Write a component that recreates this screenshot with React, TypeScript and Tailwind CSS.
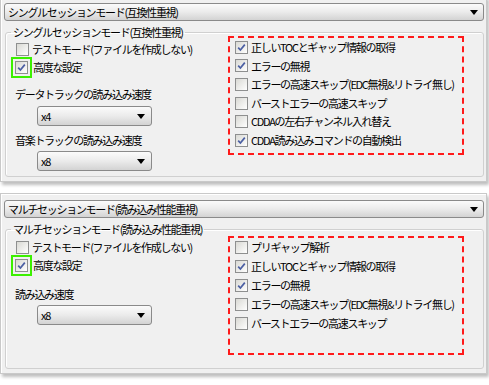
import React from 'react';

const font = "font-['Noto_Sans_CJK_JP',sans-serif] text-[11px] tracking-[-1.3px] text-black";

function Check({ checked }: { checked?: boolean }) {
  return (
    <span className="w-[13px] h-[13px] shrink-0 border border-[#8e8f8f] bg-gradient-to-br from-[#d9d9d4] to-white flex items-center justify-center">
      {checked && (
        <svg width="9" height="9" viewBox="0 0 9 9">
          <path d="M1.2 4.6 L3.4 7 L7.8 1.6" stroke="#4b5fa3" strokeWidth="1.7" fill="none" />
        </svg>
      )}
    </span>
  );
}

function Arrow() {
  return (
    <svg width="8" height="5" viewBox="0 0 8 5" className="shrink-0">
      <path d="M0 0 H8 L4 5 Z" fill="#000" />
    </svg>
  );
}

function Combo({ label, small }: { label: string; small?: boolean }) {
  return (
    <div
      className={
        small
          ? 'w-[115px] h-[20px] rounded-[3px] border border-[#8a8a8a] bg-gradient-to-b from-[#fbfbfb] via-[#ebebeb] to-[#d3d3d3] flex items-center pl-[3px] pr-[6px]'
          : 'h-[18px] rounded-[3px] border border-[#8a8a8a] bg-gradient-to-b from-[#fbfbfb] via-[#ebebeb] to-[#d3d3d3] flex items-center pl-[3px] pr-[5px]'
      }
    >
      <span className="flex-1 leading-none">{label}</span>
      <Arrow />
    </div>
  );
}

function Row({ label, checked, h }: { label: string; checked?: boolean; h: string }) {
  return (
    <div className={`flex items-center gap-[3px] ${h}`}>
      <Check checked={checked} />
      <span className="whitespace-nowrap">{label}</span>
    </div>
  );
}

function Advanced() {
  return (
    <div className="flex items-center h-[18px] ml-[-5px]">
      <span className="w-[21px] h-[21px] border-2 border-[#3cf000] flex items-center justify-center">
        <Check checked />
      </span>
      <span className="ml-[1px]">高度な設定</span>
    </div>
  );
}

function Panel({
  title,
  className,
  left,
  right,
}: {
  title: string;
  className: string;
  left: React.ReactNode;
  right: React.ReactNode;
}) {
  return (
    <div
      className={`w-[487px] bg-[#f0f0f0] border border-[#c9c9c9] shadow-[inset_1px_1px_0_#fff,2px_3px_3px_rgba(0,0,0,0.25)] pl-[3px] pr-[2px] pt-[6px] pb-[4px] ${className}`}
    >
      <Combo label={title} />
      <fieldset className="mt-[4px] ml-[1px] border border-[#d0d0d0] rounded-[3px] shadow-[inset_1px_1px_0_#fff]">
        <legend className="ml-[5px] px-[2px] leading-[14px]">{title}</legend>
        <div className="flex">
          <div className="w-[222px] pl-[10px]">{left}</div>
          {right}
        </div>
      </fieldset>
    </div>
  );
}

export default function App() {
  return (
    <div className={`w-[489px] h-[385px] bg-white overflow-hidden ${font}`}>
      <Panel
        title="シングルセッションモード(互換性重視)"
        className="mt-[-4px]"
        left={
          <div className="pt-[1px] pb-[5px]">
            <Row label="テストモード(ファイルを作成しない)" h="h-[18px]" />
            <Advanced />
            <div className="h-[18px] mt-[9px] flex items-center ml-[-1px]">データトラックの読み込み速度</div>
            <div className="mt-[3px] ml-[21px]">
              <Combo label="x4" small />
            </div>
            <div className="h-[18px] mt-[5px] flex items-center ml-[-1px]">音楽トラックの読み込み速度</div>
            <div className="mt-[2px] ml-[21px]">
              <Combo label="x8" small />
            </div>
          </div>
        }
        right={
          <div className="mt-[-3px] self-start w-[236px] border-2 border-dashed border-[#ff1a1a] pl-[5px] pb-[3px]">
            <Row label="正しいTOCとギャップ情報の取得" checked h="h-[18.6px]" />
            <Row label="エラーの無視" checked h="h-[18.6px]" />
            <Row label="エラーの高速スキップ(EDC無視&リトライ無し)" h="h-[18.6px]" />
            <Row label="バーストエラーの高速スキップ" h="h-[18.6px]" />
            <Row label="CDDAの左右チャンネル入れ替え" h="h-[18.6px]" />
            <Row label="CDDA読み込みコマンドの自動検出" checked h="h-[18.6px]" />
          </div>
        }
      />
      <Panel
        title="マルチセッションモード(読み込み性能重視)"
        className="mt-[11px]"
        left={
          <div className="pt-[2px]">
            <Row label="テストモード(ファイルを作成しない)" h="h-[18px]" />
            <Advanced />
            <div className="h-[18px] mt-[11px] flex items-center ml-[-1px]">読み込み速度</div>
            <div className="mt-[2px] ml-[21px]">
              <Combo label="x8" small />
            </div>
          </div>
        }
        right={
          <div className="self-start mb-[13px] w-[236px] border-2 border-dashed border-[#ff1a1a] pl-[5px] pt-[0px] pb-[20px]">
            <Row label="プリギャップ解析" h="h-[19px]" />
            <Row label="正しいTOCとギャップ情報の取得" checked h="h-[19px]" />
            <Row label="エラーの無視" checked h="h-[19px]" />
            <Row label="エラーの高速スキップ(EDC無視&リトライ無し)" h="h-[19px]" />
            <Row label="バーストエラーの高速スキップ" h="h-[19px]" />
          </div>
        }
      />
    </div>
  );
}
